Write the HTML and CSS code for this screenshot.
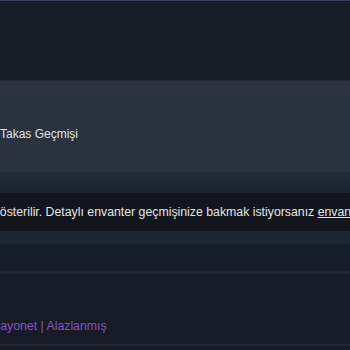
FILE: index.html
```html
<!DOCTYPE html>
<html lang="tr">
<head>
  <meta charset="UTF-8" />
  <meta name="viewport" content="width=device-width, initial-scale=1" />
  <title>Takas Geçmişi</title>
  <link rel="stylesheet" href="styles.css">
</head>
<body>

  <div class="topline"></div>
  <header class="header"></header>

  <div class="page-head">
    <div class="crumbs">
      <span class="crumb">Takas Geçmişi</span>
    </div>
    <div class="page-head-foot"></div>
  </div>

  <div class="notice">
    <span class="notice-text">gösterilir. Detaylı envanter geçmişinize bakmak istiyorsanız <a href="#">envanter geçmişi</a> sayfasına gidin.</span>
  </div>

  <div class="history">
    <div class="history-bar"></div>
    <div class="history-gap"></div>
    <div class="trade-row">
      <span class="item-name">Bayonet | Alazlanmış</span>
    </div>
  </div>

</body>
</html>
```

FILE: styles.css
```css
body {
  margin: 0;
  font-family: Arial, "Liberation Sans", sans-serif;
  background-color: #171c26;
  overflow: hidden;
  height: 350px;
}

.topline {
  height: 1px;
  background-color: #3b3f58;
}

.header {
  height: 79px;
  background-color: #171d25;
  border-bottom: 1px solid #232b35;
}

.page-head {
  background: linear-gradient(to bottom, #2b3440 0%, #28313d 100%);
}

.crumbs {
  height: 91px;
  display: flex;
  align-items: center;
}

.crumb {
  color: #dfe3e6;
  font-size: 12px;
  margin-top: 14px;
}

.page-head-foot {
  height: 21px;
  background: linear-gradient(to bottom, #232c38 0%, #1c2330 100%);
}

.notice {
  height: 35px;
  background-color: #12161c;
  display: flex;
  align-items: center;
  white-space: nowrap;
}

.notice-text {
  color: #e2e5e8;
  font-size: 12.3px;
  margin-left: -7px;
  padding-top: 3px;
}

.notice-text a {
  color: #e2e5e8;
}

.history {
  padding-top: 3px;
  background-color: #13171d;
}

.history-bar {
  height: 13px;
  background-color: #1c2733;
}

.history-gap {
  height: 27px;
  background-color: #161c26;
  border-bottom: 3px solid #1e2835;
}

.trade-row {
  height: 70px;
  background-color: #161b25;
  border-bottom: 2px solid #1f2935;
  display: flex;
  align-items: flex-end;
}

.item-name {
  color: #8552c4;
  font-size: 12.3px;
  margin-left: -8px;
  margin-bottom: 11px;
}
```
